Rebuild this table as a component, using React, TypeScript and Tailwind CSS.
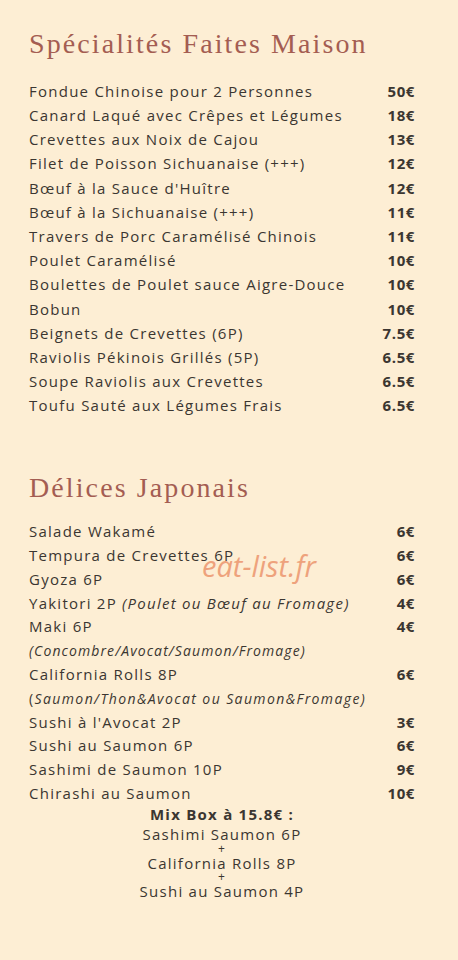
import React from "react";

type Item = { name: React.ReactNode; price?: string };

const specialites: Item[] = [
  { name: "Fondue Chinoise pour 2 Personnes", price: "50€" },
  { name: "Canard Laqué avec Crêpes et Légumes", price: "18€" },
  { name: "Crevettes aux Noix de Cajou", price: "13€" },
  { name: "Filet de Poisson Sichuanaise (+++)", price: "12€" },
  { name: "Bœuf à la Sauce d'Huître", price: "12€" },
  { name: "Bœuf à la Sichuanaise (+++)", price: "11€" },
  { name: "Travers de Porc Caramélisé Chinois", price: "11€" },
  { name: "Poulet Caramélisé", price: "10€" },
  { name: "Boulettes de Poulet sauce Aigre-Douce", price: "10€" },
  { name: "Bobun", price: "10€" },
  { name: "Beignets de Crevettes (6P)", price: "7.5€" },
  { name: "Raviolis Pékinois Grillés (5P)", price: "6.5€" },
  { name: "Soupe Raviolis aux Crevettes", price: "6.5€" },
  { name: "Toufu Sauté aux Légumes Frais", price: "6.5€" },
];

const japonais: Item[] = [
  { name: "Salade Wakamé", price: "6€" },
  { name: "Tempura de Crevettes 6P", price: "6€" },
  { name: "Gyoza 6P", price: "6€" },
  {
    name: (
      <>
        Yakitori 2P <i>(Poulet ou Bœuf au Fromage)</i>
      </>
    ),
    price: "4€",
  },
  { name: "Maki 6P", price: "4€" },
  {
    name: (
      <i className="text-[14px] tracking-[1.1px]">(Concombre/Avocat/Saumon/Fromage)</i>
    ),
  },
  { name: "California Rolls 8P", price: "6€" },
  {
    name: (
      <span className="text-[14px] tracking-[1.4px]">
        (<i>Saumon/Thon&amp;Avocat ou Saumon&amp;Fromage)</i>
      </span>
    ),
  },
  { name: "Sushi à l'Avocat 2P", price: "3€" },
  { name: "Sushi au Saumon 6P", price: "6€" },
  { name: "Sashimi de Saumon 10P", price: "9€" },
  { name: "Chirashi au Saumon", price: "10€" },
];

function Row({ item, h }: { item: Item; h: string }) {
  return (
    <div className={`flex items-center justify-between ${h}`}>
      <span className="whitespace-nowrap">{item.name}</span>
      {item.price && <span className="font-bold tracking-[0.6px]">{item.price}</span>}
    </div>
  );
}

export default function App() {
  return (
    <div
      className="relative w-[458px] h-[960px] bg-[#fdeed4] text-[#3b3631] overflow-hidden"
      style={{ fontFamily: '"Open Sans", "Liberation Sans", sans-serif' }}
    >
      <div className="pl-[29px] pr-[43px] pt-[24px] text-[15px] tracking-[1.25px]">
        <h1
          className="text-[28px] leading-[40px] tracking-[2.1px] text-[#a45d52] mb-[15px]"
          style={{ fontFamily: '"Liberation Serif", "DejaVu Serif", serif' }}
        >
          Spécialités Faites Maison
        </h1>
        <div className="flex flex-col">
          {specialites.map((it, i) => (
            <Row key={i} item={it} h="h-[24.2px]" />
          ))}
        </div>
        <h2
          className="mt-[50px] text-[28px] leading-[40px] tracking-[2.1px] text-[#a45d52] mb-[12px]"
          style={{ fontFamily: '"Liberation Serif", "DejaVu Serif", serif' }}
        >
          Délices Japonais
        </h2>
        <div className="flex flex-col">
          {japonais.map((it, i) => (
            <Row key={i} item={it} h="h-[23.8px]" />
          ))}
        </div>
        <div className="flex flex-col items-center mt-[2px] leading-[15px]">
          <div className="font-bold h-[20px]">Mix Box à 15.8€ :</div>
          <div className="h-[15px]">Sashimi Saumon 6P</div>
          <div className="text-[12px] h-[14px] leading-[14px]">+</div>
          <div className="h-[14px]">California Rolls 8P</div>
          <div className="text-[12px] h-[14px] leading-[14px]">+</div>
          <div className="h-[15px]">Sushi au Saumon 4P</div>
        </div>
      </div>
      <div
        className="absolute left-[202px] top-[544px] text-[29px] italic text-[#eea27c] tracking-[0px]"
        style={{ fontFamily: '"Open Sans", sans-serif' }}
      >
        eat-list.fr
      </div>
    </div>
  );
}
